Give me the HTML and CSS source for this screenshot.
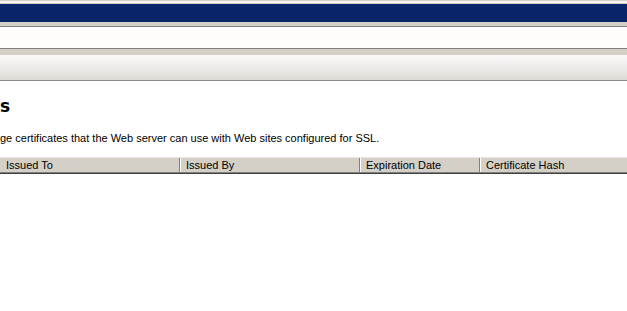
FILE: index.html
```html
<!DOCTYPE html>
<html>
<head>
<meta charset="utf-8">
<link rel="stylesheet" href="styles.css">
</head>
<body>
<div class="window">
  <div class="topedge"></div>
  <div class="titlebar"></div>
  <div class="gap1"></div>
  <div class="addressbar"></div>
  <div class="gap2"></div>
  <div class="toolbar"></div>
  <div class="content">
    <h1 class="heading">s</h1>
    <p class="desc">ge certificates that the Web server can use with Web sites configured for SSL.</p>
    <div class="listhead">
      <div class="col col1">Issued To</div>
      <div class="col col2">Issued By</div>
      <div class="col col3">Expiration Date</div>
      <div class="col col4">Certificate Hash</div>
    </div>
  </div>
</div>
</body>
</html>
```
FILE: styles.css
```css
html, body {
  margin: 0;
  padding: 0;
  background: #ffffff;
  overflow: hidden;
}
body {
  font-family: "Liberation Sans", "DejaVu Sans", sans-serif;
  font-size: 11px;
  color: #000;
}
.window {
  width: 627px;
  height: 311px;
  display: flex;
  flex-direction: column;
}
.topedge {
  height: 1px;
  background: #d4d0c8;
  border-bottom: 2px solid #f6f5f2;
}
.titlebar {
  height: 18px;
  border-top: 1px solid #d4d0c8;
  background: #0a246a;
}
.gap1 {
  height: 4px;
  background: #d4d0c8;
  border-bottom: 1px solid #808080;
}
.addressbar {
  height: 21px;
  background: #fffcfc;
  border-bottom: 1px solid #808080;
}
.gap2 {
  height: 6px;
  background: #d4d0c8;
}
.toolbar {
  height: 25px;
  background: linear-gradient(#fcfafa, #f0eeec 40%, #dedad6);
  border-bottom: 1px solid #8c8a88;
}
.content {
  flex: 1;
  background: #fff;
  display: flex;
  flex-direction: column;
}
.heading {
  margin: 14px 0 0 0;
  height: 22px;
  white-space: nowrap;
  font-size: 17px;
  font-weight: bold;
  line-height: 22px;
  font-family: "DejaVu Sans", "Liberation Sans", sans-serif;
}
.desc {
  margin: 14px 0 0 0;
  height: 14px;
  white-space: nowrap;
  line-height: 14px;
}
.listhead {
  margin-top: 12px;
  display: flex;
  height: 14px;
  background: #d4d0c8;
  border-top: 1px solid #e8e6e2;
  border-bottom: 1px solid #808080;
  box-shadow: 0 1px 0 #404040;
}
.col {
  box-sizing: border-box;
  padding-left: 6px;
  line-height: 14px;
  white-space: nowrap;
  border-right: 1px solid #808080;
  box-shadow: 1px 0 0 #ffffff;
}
.col1 { width: 180px; }
.col2 { width: 180px; }
.col3 { width: 120px; }
.col4 { flex: 1; border-right: none; box-shadow: none; }
```
